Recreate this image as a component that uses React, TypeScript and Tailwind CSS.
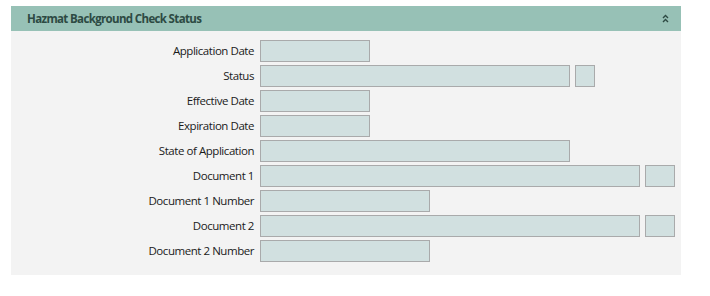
import React from 'react';

type Row = { label: string; width: number; extra?: number };

const rows: Row[] = [
  { label: 'Application Date', width: 110 },
  { label: 'Status', width: 310, extra: 20 },
  { label: 'Effective Date', width: 110 },
  { label: 'Expiration Date', width: 110 },
  { label: 'State of Application', width: 310 },
  { label: 'Document 1', width: 380, extra: 30 },
  { label: 'Document 1 Number', width: 170 },
  { label: 'Document 2', width: 380, extra: 30 },
  { label: 'Document 2 Number', width: 170 },
];

const App = () => {
  return (
    <div
      className="w-[710px] h-[296px] bg-white pt-[6px] pl-[11px]"
      style={{ fontFamily: '"Open Sans", "Noto Sans", sans-serif' }}
    >
      <div className="w-[670px] bg-[#f3f3f3]">
        {/* Header */}
        <div className="h-[25px] bg-[#97c1b6] flex items-center justify-between pl-[16px] pr-[12px]">
          <span className="text-[11.5px] font-bold text-[#2d4a43] tracking-[-0.65px]">
            Hazmat Background Check Status
          </span>
          <svg width="7" height="9" viewBox="0 0 7 9" className="text-[#2d4a43]">
            <path d="M1 4 L3.5 1.5 L6 4" fill="none" stroke="currentColor" strokeWidth="1.4" />
            <path d="M1 8 L3.5 5.5 L6 8" fill="none" stroke="currentColor" strokeWidth="1.4" />
          </svg>
        </div>

        {/* Fields */}
        <div className="flex flex-col gap-[3px] pt-[9px] pb-[13px]">
          {rows.map((row) => (
            <div key={row.label} className="flex items-center h-[22px]">
              <label className="w-[243px] text-right text-[11.5px] text-[#1a1a1a] tracking-[-0.45px]">
                {row.label}
              </label>
              <div className="flex gap-[5px] ml-[6px]">
                <div
                  className="h-[22px] bg-[#d1e0e0] border border-[#a9aaab]"
                  style={{ width: row.width }}
                />
                {row.extra && (
                  <div
                    className="h-[22px] bg-[#d1e0e0] border border-[#a9aaab]"
                    style={{ width: row.extra }}
                  />
                )}
              </div>
            </div>
          ))}
        </div>
      </div>
    </div>
  );
};

export default App;
